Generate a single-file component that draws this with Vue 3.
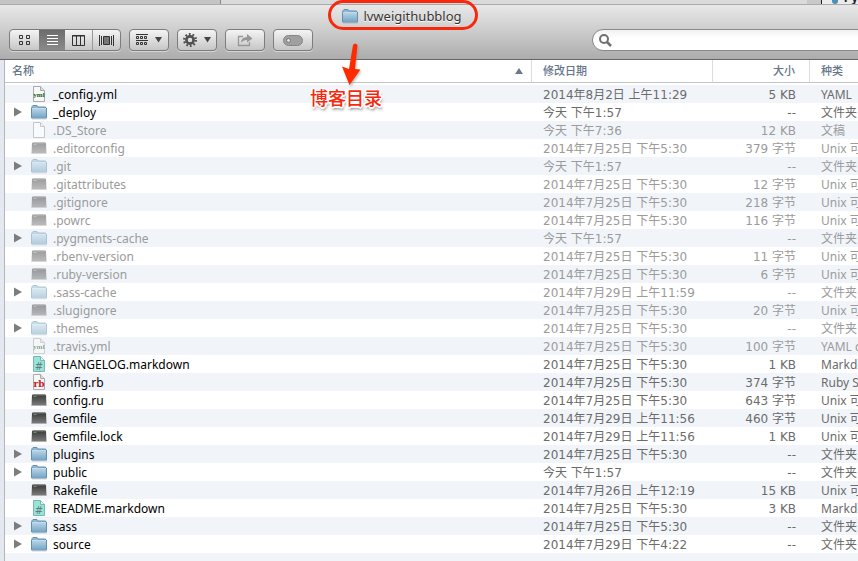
<script setup>
const D5 = '2014年7月25日 下午5:30'
const EXEC = 'Unix 可执行文件'
const files = [
  ['_config.yml', '2014年8月2日 上午11:29', '5 KB', 'YAML', 'yml', false],
  ['_deploy', '今天 下午1:57', '--', '文件夹', 'folder', false],
  ['.DS_Store', '今天 下午7:36', '12 KB', '文稿', 'doc', true],
  ['.editorconfig', D5, '379 字节', EXEC, 'exec', true],
  ['.git', '今天 下午1:57', '--', '文件夹', 'folder', true],
  ['.gitattributes', D5, '12 字节', EXEC, 'exec', true],
  ['.gitignore', D5, '218 字节', EXEC, 'exec', true],
  ['.powrc', D5, '116 字节', EXEC, 'exec', true],
  ['.pygments-cache', '今天 下午1:57', '--', '文件夹', 'folder', true],
  ['.rbenv-version', D5, '11 字节', EXEC, 'exec', true],
  ['.ruby-version', D5, '6 字节', EXEC, 'exec', true],
  ['.sass-cache', '2014年7月29日 上午11:59', '--', '文件夹', 'folder', true],
  ['.slugignore', D5, '20 字节', EXEC, 'exec', true],
  ['.themes', D5, '--', '文件夹', 'folder', true],
  ['.travis.yml', D5, '100 字节', 'YAML document', 'yml', true],
  ['CHANGELOG.markdown', D5, '1 KB', 'Markdown', 'md', false],
  ['config.rb', D5, '374 字节', 'Ruby Source', 'rb', false],
  ['config.ru', D5, '643 字节', EXEC, 'exec', false],
  ['Gemfile', '2014年7月29日 上午11:56', '460 字节', EXEC, 'exec', false],
  ['Gemfile.lock', '2014年7月29日 上午11:56', '1 KB', EXEC, 'exec', false],
  ['plugins', D5, '--', '文件夹', 'folder', false],
  ['public', '今天 下午1:57', '--', '文件夹', 'folder', false],
  ['Rakefile', '2014年7月26日 上午12:19', '15 KB', EXEC, 'exec', false],
  ['README.markdown', D5, '3 KB', 'Markdown', 'md', false],
  ['sass', D5, '--', '文件夹', 'folder', false],
  ['source', '2014年7月29日 下午4:22', '--', '文件夹', 'folder', false],
].map(([name, date, size, kind, icon, dim]) => ({ name, date, size, kind, icon, dim }))
</script>

<template>
  <div class="screen">
    <svg class="defs" width="0" height="0" aria-hidden="true">
      <defs>
        <linearGradient id="gFolder" x1="0" y1="0" x2="0" y2="1">
          <stop offset="0" stop-color="#b4d2e6" /><stop offset="1" stop-color="#77a6c7" />
        </linearGradient>
        <linearGradient id="gExec" x1="0" y1="0" x2="0" y2="1">
          <stop offset="0" stop-color="#3c3c3c" /><stop offset="1" stop-color="#7c7c7c" />
        </linearGradient>
        <symbol id="i-folder" viewBox="0 0 16 16">
          <path d="M1 15h15" stroke="#888" stroke-opacity=".35" />
          <path d="M.5 14V4H1V2.500L2 1.500h4l1 1.500h7.500v1h1v10z" fill="#8fb8d3" stroke="#6590ad" />
          <path d="M1 5h14v8.500H1z" fill="url(#gFolder)" />
          <path d="M1 4.500h14" stroke="#c3dcec" />
        </symbol>
        <symbol id="i-exec" viewBox="0 0 16 16">
          <path d="M1 3h14l.5 10.500H.5z" fill="url(#gExec)" />
          <path d="M1.500 2.500h13" stroke="#8c8c8c" />
          <path d="M1.500 3.500h13" stroke="#5c5c5c" />
          <path d="M2.500 4.500h3" stroke="#66946a" />
          <path d="M.5 13.500h15" stroke="#b0b0b0" />
        </symbol>
        <symbol id="i-doc" viewBox="0 0 16 16">
          <path d="M2.500.5h7l4 4v11h-11z" fill="#fff" stroke="#999" />
          <path d="M9.500.5v4h4" fill="#eee" stroke="#999" />
        </symbol>
        <symbol id="i-yml" viewBox="0 0 16 16">
          <path d="M2.500.5h7l4 4v11h-11z" fill="#f7f7f7" stroke="#aaa" />
          <path d="M9.500.5v4h4" fill="#ddd" stroke="#aaa" />
          <text x="8" y="11" text-anchor="middle" font-family="Liberation Serif, serif" font-size="7" font-weight="700" fill="#145c22">yml</text>
        </symbol>
        <symbol id="i-md" viewBox="0 0 16 16">
          <path d="M2.500.5h7l4 4v11h-11z" fill="#98e4d8" stroke="#78b8af" />
          <path d="M9.500.5v4h4" fill="#d5f7f2" stroke="#78b8af" />
          <text x="8" y="14" text-anchor="middle" font-family="DejaVu Sans, sans-serif" font-size="10" fill="#5f7f7a">#</text>
        </symbol>
        <symbol id="i-rb" viewBox="0 0 16 16">
          <path d="M2.500.5h7l4 4v11h-11z" fill="#f7f7f7" stroke="#aaa" />
          <path d="M9.500.5v4h4" fill="#ddd" stroke="#aaa" />
          <text x="8" y="13" text-anchor="middle" font-family="DejaVu Serif, serif" font-size="9" font-weight="700" fill="#c51c24">rb</text>
        </symbol>
      </defs>
    </svg>

    <div class="behind">
      <span class="tab-a"></span><span class="tab-b"></span><span class="tab-c"></span>
      <span class="tab-d"><i class="globe"></i><b>Py</b></span>
    </div>

    <header class="chrome">
      <div class="title">
        <h1 class="ring">
          <svg class="ico" aria-hidden="true"><use href="#i-folder" /></svg>
          <span>lvweigithubblog</span>
        </h1>
      </div>
      <div class="toolbar">
        <div class="group">
          <button class="seg s1" aria-label="图标">
            <svg width="11" height="10" fill="none" stroke="#333"><path d="M.5.5h3v3h-3zM7.500.5h3v3h-3zM.5 6.500h3v3h-3zM7.500 6.500h3v3h-3z" /></svg>
          </button>
          <button class="seg on" aria-label="列表">
            <svg width="11" height="10" stroke="#fff"><path d="M0 .5h11M0 3.500h11M0 6.500h11M0 9.500h11" /></svg>
          </button>
          <button class="seg" aria-label="分栏">
            <svg width="13" height="11" fill="none" stroke="#333"><path d="M.5.5h12v10H.5zM4.500 1v9M8.500 1v9M0 1h13" /></svg>
          </button>
          <button class="seg s4" aria-label="封面">
            <svg width="15" height="11" fill="none" stroke="#333"><path d="M.5 0v11M2.500 1v9M12.500 1v9M14.500 0v11" /><path d="M4.500 1.500h6v8h-6z" fill="#777" /></svg>
          </button>
        </div>
        <button class="btn" aria-label="排列">
          <svg width="12" height="12" fill="none" stroke="#333"><path d="M0 .5h12M0 6.500h12" /><path d="M.5 2.500h2v2h-2zM4.500 2.500h2v2h-2zM8.500 2.500h2v2h-2zM.5 8.500h2v2h-2zM4.500 8.500h2v2h-2zM8.500 8.500h2v2h-2z" /></svg>
          <svg width="7" height="6"><path d="M0 0h7L3.500 5.500z" fill="#444" /></svg>
        </button>
        <button class="btn" aria-label="操作">
          <svg width="14" height="14" viewBox="-7 -7 14 14" fill="none" stroke="#505050"><circle r="3.600" stroke-width="2.600" /><circle r="5.800" stroke-width="2.400" stroke-dasharray="1.700 1.944" /></svg>
          <svg width="7" height="6"><path d="M0 0h7L3.500 5.500z" fill="#444" /></svg>
        </button>
        <button class="btn" aria-label="共享">
          <svg width="16" height="14" fill="none" stroke="#979797"><path d="M6 3.500H1.500v9h11V9" stroke-width="1.300" /><path d="M4 10q0-6 6-6V1l5.500 4.500L10 9.500V7q-4 0-6 3z" fill="#979797" stroke="none" /></svg>
        </button>
        <button class="btn" aria-label="标签">
          <svg width="20" height="11"><rect x=".5" y=".5" width="19" height="10" rx="5" fill="#a0a0a0" stroke="#858585" /><circle cx="5.500" cy="5.500" r="2" fill="#ddd" stroke="#777" /></svg>
        </button>
        <label class="search">
          <svg width="14" height="14" fill="none" stroke="#707070"><circle cx="6" cy="6" r="4" stroke-width="2" /><path d="M9 9l4 4" stroke-width="2.500" /></svg>
          <input type="search" aria-label="搜索" />
        </label>
      </div>
      <div class="note">
        <svg width="20" height="44" viewBox="0 0 20 44" aria-hidden="true"><path d="M12 3q2-3 4.500 0L14 27l5.500 0.500L8.500 43 1 24.500l7 2.500z" fill="#ff2a00" /></svg>
        <span>博客目录</span>
      </div>
    </header>

    <main class="pane">
      <table>
        <colgroup><col /><col class="c-date" /><col class="c-size" /><col class="c-kind" /></colgroup>
        <thead>
          <tr>
            <th><div class="sorted">名称<svg width="8" height="6" aria-hidden="true"><path d="M4 0l4 6H0z" fill="#6b7a8c" /></svg></div></th>
            <th>修改日期</th>
            <th class="num">大小</th>
            <th>种类</th>
          </tr>
        </thead>
        <tbody>
          <tr class="gap"><td colspan="4"></td></tr>
          <tr v-for="f in files" :key="f.name" :class="{ dim: f.dim }">
            <td class="first">
              <div class="name">
                <button v-if="f.icon === 'folder'" class="tri" :aria-label="f.name">
                  <svg width="8" height="10"><path d="M0 .5l8 4.500-8 4.500z" fill="#7d7d7d" /></svg>
                </button>
                <span v-else class="tri"></span>
                <svg class="ico" aria-hidden="true"><use :href="'#i-' + f.icon" /></svg>
                <span class="label">{{ f.name }}</span>
              </div>
            </td>
            <td class="wide">{{ f.date }}</td>
            <td class="wide num">{{ f.size }}</td>
            <td>{{ f.kind }}</td>
          </tr>
          <tr class="tail"><td colspan="4"></td></tr>
        </tbody>
      </table>
    </main>
  </div>
</template>

<style>
body { background: #fff; overflow: hidden; }
</style>

<style scoped>
* { box-sizing: border-box; }
.screen {
  display: flex;
  flex-direction: column;
  min-height: 100vh;
  overflow: hidden;
  font: 12px/18px "Noto Sans", "Noto Sans CJK SC", sans-serif;
  color: #000;
}
.defs { position: absolute; }
button { margin: 0; padding: 0; border: 0; background: none; font: inherit; }
svg { display: block; flex: none; }

.behind { display: flex; height: 5px; background: #d9dadc; border-bottom: 1px solid #aaa; overflow: hidden; }
.tab-a { width: 221px; background: #c3c4c6; border-right: 1px solid #888; }
.tab-b { flex: 1; }
.tab-c { width: 15px; background: #c8c9cb; border-right: 1px solid #222; }
.tab-d { display: flex; gap: 6px; width: 36px; background: #ececec; padding-left: 10px; }
.tab-d b { margin-top: -11px; color: #222; }
.globe { width: 7px; height: 4px; background: #4b91b5; border-radius: 0 0 4px 4px; }

.chrome {
  position: relative;
  height: 55px;
  background: linear-gradient(#e8e8e8, #cbcbcb 50%, #acacac);
  border-bottom: 1px solid #666;
}
.title { display: flex; justify-content: center; height: 24px; padding-right: 52px; }
.ring {
  display: flex;
  align-items: center;
  gap: 5px;
  height: 30px;
  margin: -5px 0 0;
  padding: 2px 13px 0 11px;
  border: 3px solid #f8280c;
  border-radius: 15px;
  font-size: 13px;
  font-weight: 400;
  color: #333;
  text-shadow: 0 1px 0 #fff;
}
.ico { width: 16px; height: 16px; }
.toolbar { display: flex; gap: 8px; padding-left: 9px; }
.group, .btn {
  display: flex;
  height: 22px;
  border: 1px solid #7c7c7c;
  border-radius: 4px;
  background: linear-gradient(#f4f4f4, #c6c6c6);
  box-shadow: 0 1px 0 #d5d5d5;
}
.group { width: 112px; overflow: hidden; }
.seg { display: flex; align-items: center; justify-content: center; flex: 27; }
.s1 { flex: 29; }
.on { background: linear-gradient(#6c6c6c, #8a8a8a); }
.s4 { border-left: 1px solid #999; }
.btn { width: 40px; align-items: center; justify-content: center; gap: 7px; }
.search {
  display: flex;
  align-items: center;
  flex: 1;
  height: 22px;
  margin: 0 -20px 0 271px;
  padding-left: 5px;
  border: 1px solid #8a8a8a;
  border-radius: 11px;
  background: linear-gradient(#f1f1f1, #fff 40%);
}
.search input { flex: 1; min-width: 0; border: 0; background: none; outline: 0; font: inherit; }

.note {
  position: absolute;
  left: 310px;
  top: 37px;
  display: flex;
  flex-direction: column;
  align-items: center;
  color: #f8280c;
  font-size: 18px;
  line-height: 24px;
  font-weight: 500;
  text-shadow: 1px 1px #fff, -1px -1px #fff, -1px 1px #fff, 1px -1px #fff, 2px 0 #fff, -2px 0 #fff, 0 2px #fff, 1px 3px 3px #666;
}
.note svg { filter: drop-shadow(1px 2px 1px #8888); margin-left: 10px; }

.pane { flex: 1; background: #fff; border-left: 1px solid #b5b5b5; box-shadow: -4px 0 #e4e8f0; margin-left: 4px; }
table { width: 100%; table-layout: fixed; border-collapse: separate; border-spacing: 0; }
.c-date { width: 181px; }
.c-size { width: 97px; }
.c-kind { width: 48px; }
th, td { padding: 0 0 0 11px; text-align: left; white-space: nowrap; overflow: hidden; }
th {
  height: 23px;
  line-height: 22px;
  font-size: 11px;
  font-weight: 500;
  color: #66758a;
  border-bottom: 1px solid #c4c4c4;
  border-right: 1px solid #dcdcdc;
}
th:first-child { padding-left: 7px; }
th:last-child { border-right: 0; }
.sorted { display: flex; align-items: center; justify-content: space-between; padding-right: 8px; }
td { height: 18px; padding-top: 2px; line-height: 16px; color: #6b6b6b; }
td.first { padding: 0 0 0 7px; }
th.num, td.num { text-align: right; padding-right: 14px; }
.gap td { height: 2px; padding: 0; }
tbody tr:nth-child(even) { background: #f1f5fa; }
.wide { font-family: "DejaVu Sans", "Noto Sans CJK SC", sans-serif; }
.name { display: flex; align-items: center; height: 18px; color: #000; }
.label { padding-top: 2px; }
.tri { width: 19px; height: 10px; flex: none; padding-left: 2px; }
.name .ico { margin-right: 6px; }
.dim td, .dim .name { color: #9b9b9b; }
.dim .ico { opacity: .5; }
</style>
